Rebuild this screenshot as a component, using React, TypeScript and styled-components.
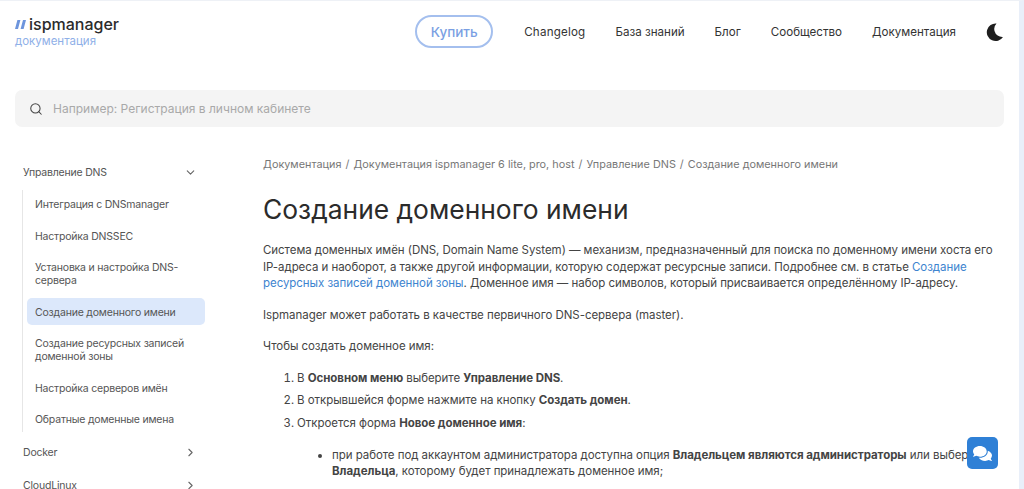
import React from "react";
import styled, { createGlobalStyle } from "styled-components";
import { ChevronDown, ChevronRight, Search } from "lucide-react";
import { FaComments } from "react-icons/fa";

const GlobalStyle = createGlobalStyle`
  html, body {
    margin: 0;
    height: 489px;
    overflow: hidden;
    background: #fff;
    font-family: "Inter", "Noto Sans", sans-serif;
    color: #333;
  }
  * { box-sizing: border-box; }
`;

const Page = styled.div`
  height: 489px;
  overflow: hidden;
  padding: 0 15px;
  border-top: 1px solid #eef1f6;
  border-right: 5px solid #e9eff9;
`;

const Header = styled.header`
  height: 89px;
  display: flex;
  align-items: flex-start;
  justify-content: space-between;
`;

const Logo = styled.div`
  padding-top: 14px;
  display: flex;
  flex-direction: column;
`;

const LogoRow = styled.div`
  display: flex;
  align-items: center;
  gap: 3px;
  font-size: 16px;
  line-height: 19px;
  font-weight: 500;
  color: #2b2b2b;
`;

const LogoCaption = styled.div`
  font-size: 11.5px;
  line-height: 14px;
  color: #8fb0e8;
`;

const Nav = styled.nav`
  display: flex;
  align-items: center;
  padding-top: 14px;
`;

const BuyButton = styled.button`
  width: 78px;
  height: 33px;
  margin-right: 31px;
  border: 2px solid #a4bfee;
  border-radius: 17px;
  background: #fff;
  color: #7a9fe3;
  font: 500 13.5px "Inter", sans-serif;
`;

const NavLink = styled.a`
  font-size: 11.6px;
  color: #333;
  margin-right: 30px;
  &:first-of-type { letter-spacing: 0.2px; }
`;

const Moon = styled.svg`
  width: 19px;
  height: 20px;
  margin-left: -1px;
  fill: #1e1e1e;
`;

const SearchBar = styled.div`
  height: 37px;
  border-radius: 7px;
  background: #f4f4f4;
  display: flex;
  align-items: center;
  gap: 10px;
  padding: 0 14px;
  font-size: 12px;
  color: #a9a9a9;
`;

const Body = styled.div`
  display: flex;
  padding-top: 29px;
`;

const Sidebar = styled.aside`
  width: 191px;
  margin-right: 57px;
  flex: none;
  font-size: 10.5px;
  letter-spacing: -0.2px;
  line-height: 13px;
  color: #555;
`;

const Section = styled.div`
  height: 33px;
  display: flex;
  align-items: center;
  justify-content: space-between;
  padding: 0 9px 0 8px;
  & svg { color: #666; }
`;

const SubList = styled.div`
  margin: 1px 0 4px 7px;
  border-left: 1px solid #e6e6e6;
  padding-left: 4px;
`;

const SubItem = styled.div<{ $active?: boolean }>`
  padding: 8px 8px 6px;
  margin-bottom: 4.5px;
  border-radius: 5px;
  width: 178px;
  background: ${(p) => (p.$active ? "#dce8fb" : "transparent")};
  &:last-child { margin-bottom: 0; }
`;

const Main = styled.main`
  flex: 1;
  min-width: 0;
  font-size: 11.5px;
  letter-spacing: -0.05px;
  line-height: 16.5px;
  color: #444;
`;

const Crumbs = styled.div`
  display: flex;
  gap: 4px;
  font-size: 10.85px;
  letter-spacing: 0;
  line-height: 15px;
  color: #777;
  padding-top: 1px;
`;

const Title = styled.h1`
  margin: 20px 0 16px;
  font-size: 26.4px;
  letter-spacing: 0;
  line-height: 34px;
  font-weight: 400;
  color: #2b2b2b;
`;

const Para = styled.p`
  margin: 0 0 15px;
`;

const NoBreak = styled.span`
  white-space: nowrap;
`;

const DocLink = styled.a`
  color: #3d84cf;
`;

const Steps = styled.ol`
  margin: 0;
  padding: 0 0 0 34px;
  & > li { margin-bottom: 6px; }
`;

const Bullets = styled.ul`
  margin: 15.5px 0 0;
  padding-left: 35px;
  list-style: disc;
`;

const ChatButton = styled.button`
  position: fixed;
  left: 967px;
  top: 437px;
  width: 31px;
  height: 32px;
  border: none;
  border-radius: 5px;
  background: #2f80d6;
  color: #fff;
  display: flex;
  align-items: center;
  justify-content: center;
  padding: 0;
`;

const links = ["Changelog", "База знаний", "Блог", "Сообщество", "Документация"];

const App: React.FC = () => {
  return (
    <Page>
      <GlobalStyle />
      <Header>
        <Logo>
          <LogoRow>
            <svg width="11" height="9" viewBox="0 0 11 9">
              <path d="M2.4 0h3L3 9H0zM8 0h3L8.6 9h-3z" fill="#6d95dd" />
            </svg>
            ispmanager
          </LogoRow>
          <LogoCaption>документация</LogoCaption>
        </Logo>
        <Nav>
          <BuyButton>Купить</BuyButton>
          {links.map((l) => (
            <NavLink key={l}>{l}</NavLink>
          ))}
          <Moon viewBox="0 0 19 20">
            <path d="M11.5 1.5A8.8 8.8 0 1 0 18 15 8 8 0 0 1 9.5 9 8 8 0 0 1 11.5 1.5z" />
          </Moon>
        </Nav>
      </Header>
      <SearchBar>
        <Search size={14} color="#444" strokeWidth={1.8} />
        Например: Регистрация в личном кабинете
      </SearchBar>
      <Body>
        <Sidebar>
          <Section>
            Управление DNS <ChevronDown size={13} />
          </Section>
          <SubList>
            <SubItem>Интеграция с DNSmanager</SubItem>
            <SubItem>Настройка DNSSEC</SubItem>
            <SubItem>Установка и настройка DNS-сервера</SubItem>
            <SubItem $active>Создание доменного имени</SubItem>
            <SubItem>Создание ресурсных записей доменной зоны</SubItem>
            <SubItem>Настройка серверов имён</SubItem>
            <SubItem>Обратные доменные имена</SubItem>
          </SubList>
          <Section>
            Docker <ChevronRight size={13} />
          </Section>
          <Section>
            CloudLinux <ChevronRight size={13} />
          </Section>
        </Sidebar>
        <Main>
          <Crumbs>
            <span>Документация</span>
            <span>/</span>
            <span>Документация ispmanager 6 lite, pro, host</span>
            <span>/</span>
            <span>Управление DNS</span>
            <span>/</span>
            <span>Создание доменного имени</span>
          </Crumbs>
          <Title>Создание доменного имени</Title>
          <Para>
            Система доменных имён (DNS, Domain Name System) — механизм, предназначенный для поиска по
            доменному имени хоста его <NoBreak>IP-адреса</NoBreak> и наоборот, а также другой информации,
            которую содержат ресурсные записи. Подробнее см. в статье{" "}
            <DocLink>Создание ресурсных записей доменной зоны</DocLink>. Доменное имя — набор символов,
            который присваивается определённому IP-адресу.
          </Para>
          <Para>Ispmanager может работать в качестве первичного DNS-сервера (master).</Para>
          <Para>Чтобы создать доменное имя:</Para>
          <Steps>
            <li>
              В <b>Основном меню</b> выберите <b>Управление DNS</b>.
            </li>
            <li>
              В открывшейся форме нажмите на кнопку <b>Создать домен</b>.
            </li>
            <li>
              Откроется форма <b>Новое доменное имя</b>:
              <Bullets>
                <li>
                  при работе под аккаунтом администратора доступна опция{" "}
                  <b>Владельцем являются администраторы</b> или выберите <b>Владельца</b>, которому
                  будет принадлежать доменное имя;
                </li>
              </Bullets>
            </li>
          </Steps>
        </Main>
      </Body>
      <ChatButton>
        <FaComments size={19} />
      </ChatButton>
    </Page>
  );
};

export default App;
